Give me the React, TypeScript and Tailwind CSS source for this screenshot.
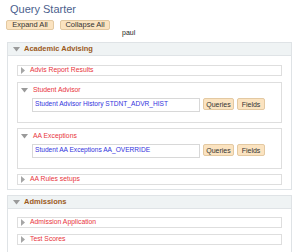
import { ReactNode } from "react";

const Caret = ({ open }: { open?: boolean }) =>
  open ? (
    <svg width="7" height="5" viewBox="0 0 7 5" className="shrink-0">
      <path d="M0 0 L7 0 L3.5 4.5 Z" fill="#9a9a9a" />
    </svg>
  ) : (
    <svg width="4" height="7" viewBox="0 0 4 7" className="shrink-0">
      <path d="M0 0 L4 3.5 L0 7 Z" fill="#a6a6a6" />
    </svg>
  );

const OrangeButton = ({ label, className }: { label: string; className?: string }) => (
  <div
    className={`flex items-center justify-center rounded-[2px] border border-[#e3c9a2] bg-[#fbe3c0] text-[#333] leading-none ${className ?? ""}`}
  >
    {label}
  </div>
);

const ClosedItem = ({ label, className }: { label: string; className?: string }) => (
  <div className={`flex h-[11px] items-center gap-[5px] border border-[#dedede] bg-white pl-[3px] ${className ?? ""}`}>
    <Caret />
    <span className="text-[6.8px] leading-none text-[#e8343c]">{label}</span>
  </div>
);

const QueryItem = ({ label, record, className }: { label: string; record: string; className?: string }) => (
  <div className={`h-[41px] border border-[#dedede] bg-white ${className ?? ""}`}>
    <div className="flex h-[12px] items-center gap-[5px] pl-[3px] pt-[2px]">
      <Caret open />
      <span className="text-[6.8px] leading-none text-[#e8343c]">{label}</span>
    </div>
    <div className="ml-[14px] mt-[3px] flex items-start gap-[3px]">
      <div className="flex h-[14px] w-[168px] items-center border border-[#d8d8d8] pl-[2px] pb-[2px] text-[6.6px] leading-none text-[#3333dd]">
        {record}
      </div>
      <OrangeButton label="Queries" className="h-[12px] w-[31px] text-[7px]" />
      <OrangeButton label="Fields" className="h-[12px] w-[28px] text-[7px]" />
    </div>
  </div>
);

const Section = ({ title, children, className }: { title: string; children: ReactNode; className?: string }) => (
  <div className={`ml-[7px] w-[285px] border border-[#dfe3e6] bg-white ${className ?? ""}`}>
    <div className="flex h-[13px] items-center gap-[4px] border-b border-[#dfe3e6] bg-[#eff3f4] pl-[5px]">
      <Caret open />
      <span className="text-[7.5px] font-bold leading-none text-[#9b5a1a]">{title}</span>
    </div>
    <div className="px-[9px]">{children}</div>
  </div>
);

export default function App() {
  return (
    <div className="h-[252px] w-[300px] overflow-hidden bg-white font-['Liberation_Sans',Arial,sans-serif]">
      <div className="h-[20px] pl-[10px] pt-[2px] text-[11px] leading-[15px] text-[#4c5f8e]">Query Starter</div>
      <div className="ml-[6px] flex items-start gap-[6px]">
        <OrangeButton label="Expand All" className="h-[10px] w-[48px] text-[7.5px]" />
        <OrangeButton label="Collapse All" className="h-[10px] w-[50px] text-[7.5px]" />
        <span className="ml-[6px] mt-[9px] text-[7px] leading-none text-[#222]">paul</span>
      </div>

      <Section title="Academic Advising" className="mt-[6px]">
        <ClosedItem label="Advis Report Results" className="mt-[9px]" />
        <QueryItem label="Student Advisor" record="Student Advisor History STDNT_ADVR_HIST" className="mt-[6px]" />
        <QueryItem label="AA Exceptions" record="Student AA Exceptions AA_OVERRIDE" className="mt-[5px]" />
        <ClosedItem label="AA Rules setups" className="mb-[4px] mt-[5px]" />
      </Section>

      <Section title="Admissions" className="mt-[5px]">
        <ClosedItem label="Admission Application" className="mt-[8px]" />
        <ClosedItem label="Test Scores" className="mb-[7px] mt-[6px]" />
      </Section>
    </div>
  );
}
